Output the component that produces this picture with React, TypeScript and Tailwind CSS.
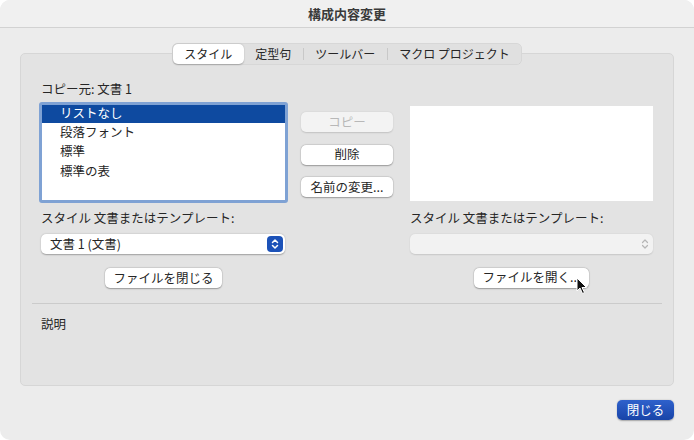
import React from 'react';

const font = { fontFamily: '"Noto Sans CJK JP", "Noto Sans", sans-serif' };

const Btn = ({ children, disabled, className = '' }: { children: React.ReactNode; disabled?: boolean; className?: string }) => (
  <div
    className={`flex h-[20px] items-center justify-center rounded-[5px] text-[12.5px] leading-none ${
      disabled
        ? 'bg-[#f3f3f3] text-[#b8b8b8] shadow-[0_0.5px_1.5px_rgba(0,0,0,0.15)]'
        : 'bg-white text-[#262626] shadow-[0_0.5px_1.5px_rgba(0,0,0,0.3),0_0_0_0.5px_rgba(0,0,0,0.08)]'
    } ${className}`}
  >
    {children}
  </div>
);

const tabs = ['スタイル', '定型句', 'ツールバー', 'マクロ プロジェクト'];

export default function App() {
  return (
    <div className="relative h-[440px] w-[694px] bg-white" style={font}>
      <div className="flex h-full w-full flex-col overflow-hidden rounded-[10px] bg-[#ececec]">
        {/* title bar */}
        <div className="flex h-[28px] shrink-0 items-center justify-center border-b border-[#d2d2d2] bg-[#f0f0f0] text-[13px] font-bold text-[#3a3a3a]">
          構成内容変更
        </div>

        <div className="relative flex flex-1 flex-col px-[20px] pt-[25px]">
          {/* tabs */}
          <div className="absolute left-0 right-0 top-[15px] z-10 flex justify-center">
            <div className="flex h-[22px] items-center rounded-[6px] bg-[#e0e0e0] p-[1px] shadow-[inset_0_0_0_0.5px_rgba(0,0,0,0.08)]">
              {tabs.map((t, i) => (
                <React.Fragment key={t}>
                  {i > 1 && <div className="h-[12px] w-px bg-[#c8c8c8]" />}
                  <div
                    className={`flex h-[20px] items-center px-[11.5px] text-[12px] text-[#262626] ${
                      i === 0 ? 'rounded-[5px] bg-white shadow-[0_0.5px_1.5px_rgba(0,0,0,0.25)]' : ''
                    }`}
                  >
                    {t}
                  </div>
                </React.Fragment>
              ))}
            </div>
          </div>

          {/* panel */}
          <div className="flex h-[333px] flex-col rounded-[5px] border border-[#d6d6d6] bg-[#e3e3e3] px-[11px] pt-[29px]">
            <div className="flex">
              {/* left column */}
              <div className="flex w-[256px] flex-col">
                <div className="pl-[9px] text-[12.5px] leading-none text-[#262626]">コピー元: 文書 1</div>
                <div className="ml-[7px] mt-[6px] h-[101px] w-[249px] rounded-[3px] border-[3px] border-[#7fa2d4] bg-white">
                  <div className="flex h-[18px] items-center bg-[#0e4aa0] pl-[18px] text-[12.5px] text-white">リストなし</div>
                  {['段落フォント', '標準', '標準の表'].map((s) => (
                    <div key={s} className="flex h-[19.5px] items-center pl-[18px] text-[12.5px] text-[#262626]">
                      {s}
                    </div>
                  ))}
                </div>
                <div className="mt-[9px] pl-[9px] text-[12.5px] leading-none text-[#262626]">スタイル 文書またはテンプレート:</div>
                <div className="ml-[9px] mt-[10px] flex h-[20px] w-[244px] items-center justify-between rounded-[5px] bg-white pl-[9px] pr-[2px] text-[12.5px] text-[#262626] shadow-[0_0.5px_1.5px_rgba(0,0,0,0.3)]">
                  <span>文書 1 (文書)</span>
                  <div className="flex h-[16px] w-[16px] items-center justify-center rounded-[4px] bg-[#1c52b8]">
                    <svg width="8" height="12" viewBox="0 0 8 12" fill="none" stroke="white" strokeWidth="1.5" strokeLinecap="round" strokeLinejoin="round">
                      <path d="M1.5 4.5 L4 2 L6.5 4.5" />
                      <path d="M1.5 7.5 L4 10 L6.5 7.5" />
                    </svg>
                  </div>
                </div>
                <Btn className="ml-[73px] mt-[14px] w-[117px]">ファイルを閉じる</Btn>
              </div>

              {/* middle buttons */}
              <div className="ml-[13px] flex w-[92px] flex-col gap-[12.5px] pt-[29px]">
                <Btn disabled>コピー</Btn>
                <Btn>削除</Btn>
                <Btn>名前の変更...</Btn>
              </div>

              {/* right column */}
              <div className="ml-[17px] flex w-[244px] flex-col pt-[23px]">
                <div className="h-[95px] w-[243px] bg-white" />
                <div className="mt-[11px] text-[12.5px] leading-none text-[#262626]">スタイル 文書またはテンプレート:</div>
                <div className="mt-[9px] flex h-[20px] w-[243px] items-center justify-end rounded-[5px] bg-[#f2f2f2] pr-[4px] shadow-[0_0.5px_1.5px_rgba(0,0,0,0.12)]">
                  <svg width="8" height="12" viewBox="0 0 8 12" fill="none" stroke="#b5b5b5" strokeWidth="1.2" strokeLinecap="round" strokeLinejoin="round">
                    <path d="M1.5 4.5 L4 2 L6.5 4.5" />
                    <path d="M1.5 7.5 L4 10 L6.5 7.5" />
                  </svg>
                </div>
                <Btn className="ml-[64px] mt-[14px] w-[115px]">ファイルを開く...</Btn>
              </div>
            </div>

            <div className="mt-[15px] h-px bg-[#cbcbcb]" />
            <div className="mt-[14px] pl-[9px] text-[12.5px] leading-none text-[#262626]">説明</div>
          </div>

          <div className="mt-[14px] flex justify-end">
            <div className="flex h-[20px] w-[57px] items-center justify-center rounded-[5px] bg-gradient-to-b from-[#2f61cc] to-[#1844a8] text-[12.5px] text-white shadow-[0_0.5px_1.5px_rgba(0,0,0,0.3)]">
              閉じる
            </div>
          </div>
        </div>
      </div>

      {/* mouse cursor */}
      <svg className="absolute left-[576px] top-[277px]" width="12" height="18" viewBox="0 0 12 18">
        <path d="M1 1 L1 14 L4 11 L6.5 16.5 L8.5 15.5 L6 10.5 L10.5 10.5 Z" fill="#111" stroke="white" strokeWidth="1" strokeLinejoin="round" />
      </svg>
    </div>
  );
}
